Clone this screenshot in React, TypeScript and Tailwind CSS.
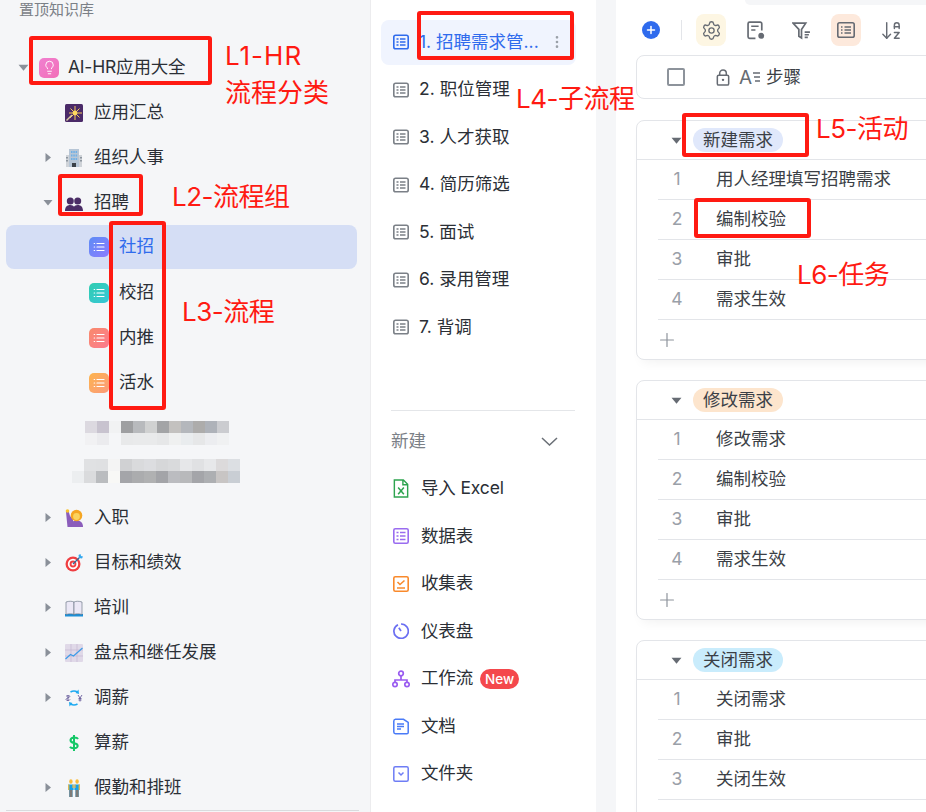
import type { ReactNode } from 'react';
import { ArrowDownAZ, EllipsisVertical, Lightbulb, Plus, Settings } from 'lucide-react';

function Caret({ open, color = '#8a9099' }: { open?: boolean; color?: string }) {
  return (
    <svg viewBox="0 0 10 10" className="h-[11px] w-[11px]">
      {open ? <path d="M.5 2.500h9L5 8z" fill={color} /> : <path d="M2.500 .5v9L8 5z" fill={color} />}
    </svg>
  );
}

function ListBadge({ className }: { className: string }) {
  return (
    <span className={`flex h-5 w-5 items-center justify-center rounded-[5px] ${className}`}>
      <svg viewBox="0 0 12 12" className="h-3 w-3" stroke="#fff" strokeWidth="1.2" strokeLinecap="round">
        <path d="M1.2 2.5h.4M1.2 6h.4M1.2 9.5h.4M4 2.5h7M4 6h7M4 9.5h7" />
      </svg>
    </span>
  );
}

const emoji: Record<string, ReactNode> = {
  spark: (
    <svg viewBox="0 0 18 18" className="h-[18px] w-[18px]">
      <rect width="18" height="18" rx="1.5" fill="#4a2a68" />
      <path d="M10 2v5M10 11v5M4 9h4M12 9h5M5.5 4.5 8.5 7.5M14.5 4.5 11.5 7.5M5 14l3.5-3.5M14.5 13.5 11.5 10.5" stroke="#f4c95a" strokeWidth="1" />
      <circle cx="10" cy="9" r="2.4" fill="#ffd95e" />
      <path d="M1.5 16.5 7 11" stroke="#d9c7a0" strokeWidth="1.4" />
    </svg>
  ),
  office: (
    <svg viewBox="0 0 18 18" className="h-[18px] w-[18px]">
      <path d="M1 6h16v12H1z" fill="#cfd3d8" />
      <path d="M4 0h10v18H4z" fill="#b7c6d6" />
      <path d="M6 2h1.5v2H6zM8.3 2h1.5v2H8.300zM10.600 2h1.500v2h-1.500zM6 5.500h1.500v2H6zM8.300 5.500h1.500v2H8.300zM10.600 5.500h1.500v2h-1.500zM6 9h1.500v2H6zM8.300 9h1.500v2H8.300zM10.600 9h1.500v2h-1.500z" fill="#6fb0e6" />
      <path d="M7 14h4v4H7z" fill="#3b4148" />
      <path d="M1 8h2v1.500H1zM1 11h2v1.500H1zM15 8h2v1.500h-2zM15 11h2v1.500h-2z" fill="#8d969f" />
    </svg>
  ),
  people: (
    <svg viewBox="0 0 18 18" className="h-[18px] w-[18px]" fill="#4b2d66">
      <circle cx="5.300" cy="7" r="3.500" />
      <circle cx="12.700" cy="7" r="3.500" />
      <path d="M0 17c0-4 2-6 5.300-6 2 0 3 .8 3.700 1.800.7-1 1.700-1.800 3.700-1.800C16 11 18 13 18 17z" />
    </svg>
  ),
  hand: (
    <svg viewBox="0 0 18 18" className="h-[18px] w-[18px]">
      <path d="M1 3 3.500 2 5 7l3 3v8H2.500z" fill="#8b5dbb" />
      <path d="M6 18c0-5 2-6.500 5.500-6.500S18 13 18 18z" fill="#8b5dbb" />
      <circle cx="2.500" cy="2" r="1.800" fill="#f8c22f" />
      <circle cx="11.500" cy="6.500" r="5.800" fill="#f5a623" />
      <circle cx="11.500" cy="7.500" r="3.400" fill="#fbd35e" />
    </svg>
  ),
  target: (
    <svg viewBox="0 0 18 18" className="h-[18px] w-[18px]">
      <circle cx="8" cy="10" r="7.500" fill="#ef3e42" />
      <circle cx="8" cy="10" r="5.200" fill="#fff" />
      <circle cx="8" cy="10" r="3.400" fill="#ef3e42" />
      <circle cx="8" cy="10" r="1.500" fill="#fff" />
      <path d="m8 10 7-7" stroke="#2d6d9c" strokeWidth="1.200" />
      <path d="m13.500 1 .5 3 3 .5 1-2-2-.5-.5-2z" fill="#35a8ee" />
    </svg>
  ),
  book: (
    <svg viewBox="0 0 18 18" className="h-[18px] w-[18px]">
      <path d="M0 15h18v2.500H0z" fill="#1d8fd6" />
      <path d="M1 3c3-1 6-1 8 0v12.500c-2-1-5-1-8 0z" fill="#ebe8f6" stroke="#5a6a7a" strokeWidth=".6" />
      <path d="M17 3c-3-1-6-1-8 0v12.500c2-1 5-1 8 0z" fill="#ebe8f6" stroke="#5a6a7a" strokeWidth=".6" />
    </svg>
  ),
  chart: (
    <svg viewBox="0 0 18 18" className="h-[18px] w-[18px]">
      <rect width="18" height="18" rx="1" fill="#e0d9e8" />
      <path d="M0 6h18M0 12h18M6 0v18M12 0v18" stroke="#c4b8d2" strokeWidth=".7" />
      <path d="m.5 15 5-4.500 3 1.500 9-8" stroke="#3c9be8" strokeWidth="1.200" fill="none" />
    </svg>
  ),
  exchange: (
    <svg viewBox="0 0 18 18" className="h-[18px] w-[18px]">
      <path d="M5.500 3a7 7 0 0 1 7 0M12.500 15a7 7 0 0 1-7 0" stroke="#1eaaf1" strokeWidth="1.600" fill="none" />
      <path d="m13.500 .5.5 4.500-3.500-1zM4.500 17.500 4 13l3.500 1z" fill="#1eaaf1" />
      <path d="M3 6v6M1 7.500c0-1 4-1 4 0S1 9 1 10.500s4 1 4 0M13 6l2 3 2-3M15 9v3.500M13.500 9.500h3M13.500 11h3" stroke="#675b9b" strokeWidth=".9" fill="none" />
    </svg>
  ),
  dollar: (
    <svg viewBox="0 0 18 18" className="h-[18px] w-[18px]" fill="none" stroke="#14c767" strokeWidth="2">
      <path d="M9 1v16M13 5c-1-1.800-7-2.300-7.500 1C5 10 13 8 12.700 12c-.3 3-6.700 2.700-7.700.7" />
    </svg>
  ),
  walk: (
    <svg viewBox="0 0 18 18" className="h-[18px] w-[14px]" preserveAspectRatio="none">
      <circle cx="5" cy="2.500" r="2.200" fill="#f9bb3a" />
      <circle cx="13" cy="2.500" r="2.200" fill="#f9bb3a" />
      <path d="M1.500 5.500h7V11H7v7H3v-7H1.500z" fill="#18a0e8" />
      <path d="M9.500 5.500h7V11H15v7h-4v-7H9.500z" fill="#18a0e8" />
      <path d="M3 11h4v7H3zM11 11h4v7h-4z" fill="#7d7b78" />
      <path d="M1.500 5.500h1.500V11H1.500zM15 5.500h1.500V11H15zM7 5.500h1.500V9H7zM9.500 5.500H11V9H9.500z" fill="#f9bb3a" />
    </svg>
  ),
};

function TreeRow({
  level,
  caret,
  icon,
  label,
  active,
}: {
  level: 2 | 3;
  caret?: 'open' | 'closed';
  icon: ReactNode;
  label: string;
  active?: boolean;
}) {
  return (
    <div
      className={`mx-[6px] flex w-[351px] items-center rounded-lg ${level === 3 ? 'pl-[83px]' : 'pl-[37px]'} ${active ? 'mb-px h-[44px] bg-[#d5def5] text-[#2f6bed]' : 'h-[45px]'}`}
    >
      {level === 2 && (
        <span className="mr-[11px] flex w-[10px] justify-center">{caret && <Caret open={caret === 'open'} />}</span>
      )}
      <span className="flex w-5 justify-center">{icon}</span>
      <span className="ml-[10px] pb-[2px] leading-[24px]">{label}</span>
    </div>
  );
}

const mosaicOne = [
  ['#dcd9e0', '#c8c3cf', '#f1f2f3', '#9e9fa1', '#b8babd', '#d0d1d1', '#a3a4a6', '#c3c1bf', '#b4b7bc', '#adacab', '#aeb2b9', '#cbccd0'],
  ['#f1f1f3', '#ebebee', '#f5f6f8', '#e8e9ea', '#e9eaeb', '#e9eaeb', '#e6e7e8', '#eff0f0', '#e9ecee', '#e6e7e8', '#ecedf0', '#f0f1f2'],
];
const mosaicTwo = [
  ['#f5f6f8', '#e0e1e3', '#dfe0e2', '#f4f4f4', '#d0d1d3', '#d9dadc', '#dcdde0', '#d6d7d9', '#d9dadc', '#e6e7e9', '#e0e1e3', '#e7e8ea', '#dcdadb', '#dcdfe3'],
  ['#eceef0', '#dadbdd', '#babcbf', '#f8f8f6', '#a4a5a9', '#abacae', '#b0b1b2', '#a3a4a8', '#bbbcc0', '#b8b9bb', '#a4a5a9', '#adafb2', '#c8c5c4', '#c9ced4'],
];

// blurred out rows in the original screenshot
function Mosaic({ rows, className }: { rows: string[][]; className: string }) {
  return (
    <div className={`flex h-[45px] flex-col ${className}`}>
      {rows.map((row, i) => (
        <div key={i} className="flex">
          {row.map((c, j) => (
            <span key={j} className="h-3 w-3" style={{ backgroundColor: c }} />
          ))}
        </div>
      ))}
    </div>
  );
}

function Sidebar() {
  return (
    <aside className="h-full w-[371px] shrink-0 border-r border-[#ececee] bg-[#f5f6f8] text-[17.5px] text-[#2b2f36]">
      <div className="h-[45px] pl-[19px] text-[15px] leading-[20px] text-[#7b8087]">置顶知识库</div>
      <div className="flex h-[45px] items-center pl-[18px]">
        <span className="flex w-[11px] justify-center">
          <Caret open />
        </span>
        <span className="ml-[10px] flex h-5 w-5 items-center justify-center rounded-[5px] bg-gradient-to-br from-[#f07fd0] to-[#f26fb8]">
          <Lightbulb size={15} color="#fff" strokeWidth={1.5} />
        </span>
        <span className="ml-[9px] pb-[2px] leading-[24px] tracking-[-0.2px]">AI-HR应用大全</span>
      </div>
      <TreeRow level={2} icon={emoji.spark} label="应用汇总" />
      <TreeRow level={2} caret="closed" icon={emoji.office} label="组织人事" />
      <TreeRow level={2} caret="open" icon={emoji.people} label="招聘" />
      <TreeRow level={3} active icon={<ListBadge className="bg-gradient-to-br from-[#5b8cf5] to-[#8b7cff]" />} label="社招" />
      <TreeRow level={3} icon={<ListBadge className="bg-gradient-to-br from-[#2fcdb0] to-[#3ac6d8]" />} label="校招" />
      <TreeRow level={3} icon={<ListBadge className="bg-gradient-to-br from-[#f98a6b] to-[#fb7a8e]" />} label="内推" />
      <TreeRow level={3} icon={<ListBadge className="bg-gradient-to-br from-[#fdb44b] to-[#fb9a7a]" />} label="活水" />
      <Mosaic rows={mosaicOne} className="pl-[85px] pt-[16px]" />
      <Mosaic rows={mosaicTwo} className="pl-[72px] pt-[9px]" />
      <TreeRow level={2} caret="closed" icon={emoji.hand} label="入职" />
      <TreeRow level={2} caret="closed" icon={emoji.target} label="目标和绩效" />
      <TreeRow level={2} caret="closed" icon={emoji.book} label="培训" />
      <TreeRow level={2} caret="closed" icon={emoji.chart} label="盘点和继任发展" />
      <TreeRow level={2} caret="closed" icon={emoji.exchange} label="调薪" />
      <TreeRow level={2} icon={emoji.dollar} label="算薪" />
      <TreeRow level={2} caret="closed" icon={emoji.walk} label="假勤和排班" />
      <div className="mx-[6px] w-[353px] border-t border-[#d9dbde]" />
    </aside>
  );
}

function TableIcon({ color }: { color: string }) {
  return (
    <svg viewBox="0 0 16 16" className="h-4 w-4 shrink-0" fill="none" stroke={color} strokeWidth="1.600">
      <rect x=".8" y="1.200" width="14.400" height="13.600" rx="1.800" />
      <path d="M3.500 5h2M3.500 8h2M3.500 11h2M7 5h5.500M7 8h5.500M7 11h5.500" strokeWidth="1.400" />
    </svg>
  );
}

const subflows = ['2. 职位管理', '3. 人才获取', '4. 简历筛选', '5. 面试', '6. 录用管理', '7. 背调'];

const createItems: { label: string; icon: ReactNode; badge?: boolean }[] = [
  {
    label: '导入 Excel',
    icon: (
      <svg viewBox="0 0 16 20" className="h-[19px] w-4" fill="none" stroke="#2ea44f" strokeWidth="1.500">
        <path d="M1 1h9.500L15 5.500V19H1zM10 1v5h5" />
        <path d="m5 9 6 7M11 9l-6 7" strokeWidth="1.600" />
      </svg>
    ),
  },
  {
    label: '数据表',
    icon: (
      <svg viewBox="0 0 16 16" className="h-4 w-4" fill="none" stroke="#9a6cf0" strokeWidth="1.600">
        <rect x=".8" y=".8" width="14.400" height="14.400" rx="1.500" />
        <path d="M3.500 4.500h2M3.500 8h2M3.500 11.500h2M7 4.500h5.500M7 8h5.500M7 11.500h5.500" />
      </svg>
    ),
  },
  {
    label: '收集表',
    icon: (
      <svg viewBox="0 0 16 16" className="h-4 w-4" fill="none" stroke="#f98a2c" strokeWidth="1.600">
        <rect x=".8" y=".8" width="14.400" height="14.400" rx="1.500" />
        <path d="m4.500 6 2.500 2.500L11.500 4.500M4 12h8" />
      </svg>
    ),
  },
  {
    label: '仪表盘',
    icon: (
      <svg viewBox="0 0 16 16" className="h-4 w-4" fill="none" stroke="#6b6ff2" strokeWidth="1.700">
        <path d="M5 1.700a7.200 7.200 0 1 0 3-.7" />
        <path d="M8 8 5.800 4.800" />
      </svg>
    ),
  },
  {
    label: '工作流',
    badge: true,
    icon: (
      <svg viewBox="0 0 18 18" className="h-[18px] w-[18px] shrink-0" fill="none" stroke="#9a5cf0" strokeWidth="1.700">
        <circle cx="9" cy="3.500" r="2.300" />
        <circle cx="3" cy="14.500" r="2.200" />
        <circle cx="15" cy="14.500" r="2.200" />
        <path d="M9 6v4M3 12.300V10h12v2.300" />
      </svg>
    ),
  },
  {
    label: '文档',
    icon: (
      <svg viewBox="0 0 16 16" className="h-[17px] w-4" fill="none" stroke="#4a7bf7" strokeWidth="1.500">
        <path d="M2.500.8h8L15.200 4v10a1.300 1.300 0 0 1-1.300 1.300H2.500A1.800 1.800 0 0 1 .8 13.500V2.500A1.800 1.800 0 0 1 2.500.8z" />
        <path d="M4 5.500h7M4 8h7M4 10.500h4" strokeWidth="1.300" />
      </svg>
    ),
  },
  {
    label: '文件夹',
    icon: (
      <svg viewBox="0 0 16 16" className="h-4 w-4" fill="none" stroke="#6e7df5" strokeWidth="1.500">
        <rect x=".8" y=".8" width="14.400" height="14.400" rx="1.500" />
        <path d="m5.500 6.500 2.500 2.500 2.500-2.500" />
      </svg>
    ),
  },
];

function MiddleColumn() {
  return (
    <section className="h-full w-[225px] shrink-0 bg-white pt-[18.5px] text-[17.5px] text-[#2b2f36]">
      <div className="flex h-[47.5px] items-center">
        <div className="ml-[10px] flex h-[45px] w-[195px] items-center rounded-lg bg-[#f0f4fe] pl-3 text-[#2f6bed]">
          <TableIcon color="#2f6bed" />
          <span className="ml-[10px] w-[129px] whitespace-nowrap pb-[1px]">1. 招聘需求管...</span>
          <EllipsisVertical size={16} color="#9aa0a8" className="ml-[1px]" />
        </div>
      </div>
      {subflows.map((name) => (
        <div key={name} className="flex h-[47.5px] items-center pl-[22px]">
          <TableIcon color="#7b8087" />
          <span className="ml-[10px] pb-[1px]">{name}</span>
        </div>
      ))}
      <div className="mx-[20px] mt-[59px] w-[184px] border-t border-[#e4e6e9]" />
      <div className="mt-[6.500px] flex h-[47.5px] items-center justify-between pl-[20px] pr-[38px] text-[#7b8087]">
        <span className="pb-[1px]">新建</span>
        <svg viewBox="0 0 17 9" className="h-[9px] w-[17px]" fill="none" stroke="#6b7077" strokeWidth="1.500">
          <path d="m1 1 7.500 7L16 1" />
        </svg>
      </div>
      {createItems.map((item) => (
        <div key={item.label} className="flex h-[47.5px] items-center pl-[22px]">
          <span className="flex w-4 justify-center">{item.icon}</span>
          <span className="ml-3 pb-[1px] tracking-[-0.15px]">{item.label}</span>
          {item.badge && (
            <span className="ml-[7px] rounded-full bg-[#f4484c] px-[5px] text-[13.500px] font-medium leading-[20px] text-white">New</span>
          )}
        </div>
      ))}
    </section>
  );
}

function ToolbarBox({ children, className = '' }: { children: ReactNode; className?: string }) {
  return <span className={`flex h-8 w-[30px] items-center justify-center rounded-lg ${className}`}>{children}</span>;
}

function TaskCard({ title, tone, tasks, withAdd = true }: { title: string; tone: string; tasks: string[]; withAdd?: boolean }) {
  return (
    <div className="mb-5 w-[320px] rounded-lg border border-[#e3e5e9] bg-white shadow-[0_8px_12px_-6px_rgba(0,0,0,0.06)]">
      <div className="flex h-[39px] items-center border-b border-[#e3e5e9] pl-[34px]">
        <Caret open color="#666b73" />
        <span className={`ml-[11px] rounded-full px-[10px] leading-[24px] text-[#3b3f46] ${tone}`}>{title}</span>
      </div>
      {tasks.map((task, i) => (
        <div key={task} className="ml-[21px] flex h-10 items-center border-b border-[#e3e5e9]">
          <span className="w-[38px] text-center text-[#9aa0a8]">{i + 1}</span>
          <span className="ml-[20px] text-[#3b3f46]">{task}</span>
        </div>
      ))}
      {withAdd && (
        <div className="flex h-[39px] items-center pl-[19px]">
          <Plus size={22} color="#8d939b" strokeWidth={1.300} />
        </div>
      )}
    </div>
  );
}

function RightPanel() {
  return (
    <section className="h-full flex-1 overflow-hidden bg-white text-[17.5px]">
      <div className="ml-[129px] h-[5px] rounded-bl-xl bg-[#f5f6f8]" />
      <div className="flex h-[50px] items-center pl-[26px]">
        <span className="flex h-[18px] w-[18px] items-center justify-center rounded-full bg-[#2f6bed]">
          <Plus size={12} color="#fff" strokeWidth={3} />
        </span>
        <span className="ml-[21px] mr-[14px] h-5 w-px bg-[#e3e5e9]" />
        <div className="flex gap-[15px]">
          <ToolbarBox className="bg-[#fdf6e3]">
            <Settings size={21} color="#666b73" strokeWidth={1.500} />
          </ToolbarBox>
          <ToolbarBox>
            <svg viewBox="0 0 18 18" className="h-[19px] w-[19px]" fill="none" stroke="#666b73" strokeWidth="1.600">
              <path d="M8 16.500H2.500a1.500 1.500 0 0 1-1.500-1.500V2.500A1.500 1.500 0 0 1 2.500 1h10A1.500 1.500 0 0 1 14 2.500V9M4 5h7M4 8.500h4" />
              <circle cx="13.500" cy="14" r="2" fill="#666b73" />
            </svg>
          </ToolbarBox>
          <ToolbarBox>
            <svg viewBox="0 0 18 18" className="h-[19px] w-[19px]" fill="none" stroke="#666b73" strokeWidth="1.600">
              <path d="M1 2h12L9 8v8l-2.500-1.500V8zM12 10.500h5M12 13h4M12 15.500h3" />
            </svg>
          </ToolbarBox>
          <ToolbarBox className="bg-[#fde9dc]">
            <svg viewBox="0 0 18 16" className="h-4 w-[18px]" fill="none" stroke="#666b73" strokeWidth="1.600">
              <rect x=".8" y=".8" width="16.400" height="14.400" rx="1.800" />
              <path d="M4 5h1.500M4 8h1.500M4 11h1.500M7.500 5H14M7.500 8H14M7.500 11H14" />
            </svg>
          </ToolbarBox>
          <ToolbarBox>
            <ArrowDownAZ size={23} color="#666b73" strokeWidth={1.500} />
          </ToolbarBox>
        </div>
      </div>
      <div className="ml-[20px] mb-[21px] flex h-[44px] w-[320px] items-center rounded-lg border border-[#e3e5e9] bg-white pl-[30px] text-[#3b3f46]">
        <span className="h-[18px] w-[18px] rounded-[2px] border-2 border-[#8d939b]" />
        <svg viewBox="0 0 14 18" className="ml-[31px] h-[17px] w-[14px]" fill="none" stroke="#666b73" strokeWidth="1.600">
          <rect x="1" y="6.500" width="12" height="10.500" rx="1.500" />
          <path d="M3.500 6.500V4.500a3.500 3.500 0 0 1 7 0v2" />
          <circle cx="7" cy="11.500" r="1.300" fill="#666b73" stroke="none" />
        </svg>
        <span className="ml-[9px] text-[19px] leading-none text-[#666b73]">A</span>
        <svg viewBox="0 0 7 12" className="ml-[1px] h-3 w-[7px]" stroke="#666b73" strokeWidth="1.300">
          <path d="M0 2h7M1 6h6M2 10h5" />
        </svg>
        <span className="ml-[6px]">步骤</span>
      </div>
      <div className="ml-[20px]">
        <TaskCard title="新建需求" tone="bg-[#e0e8fb]" tasks={['用人经理填写招聘需求', '编制校验', '审批', '需求生效']} />
        <TaskCard title="修改需求" tone="bg-[#fde5cd]" tasks={['修改需求', '编制校验', '审批', '需求生效']} />
        <TaskCard title="关闭需求" tone="bg-[#c9ecfc]" tasks={['关闭需求', '审批', '关闭生效']} />
      </div>
    </section>
  );
}

const redBoxes = [
  'left-[29px] top-[36px] h-[49px] w-[183px]',
  'left-[58px] top-[174px] h-[42px] w-[85px]',
  'left-[109px] top-[221px] h-[189px] w-[57px]',
  'left-[417px] top-[11px] h-[49px] w-[157px]',
  'left-[682px] top-[113px] h-[44px] w-[127px]',
  'left-[694px] top-[198px] h-[40px] w-[117px]',
];

const redLabels = [
  { text: 'L1-HR', pos: 'left-[225px] top-[39px] tracking-[1px]' },
  { text: '流程分类', pos: 'left-[225px] top-[76px]' },
  { text: 'L2-流程组', pos: 'left-[172px] top-[180px] tracking-[-0.5px]' },
  { text: 'L3-流程', pos: 'left-[182px] top-[295px] tracking-[-0.5px]' },
  { text: 'L4-子流程', pos: 'left-[516px] top-[82px] tracking-[-0.5px]' },
  { text: 'L5-活动', pos: 'left-[816px] top-[112px] tracking-[-0.5px]' },
  { text: 'L6-任务', pos: 'left-[797px] top-[258px] tracking-[-0.5px]' },
];

export default function App() {
  return (
    <div className="relative flex h-[812px] w-[926px] overflow-hidden bg-white font-['Inter','Noto_Sans_CJK_SC',sans-serif]">
      <Sidebar />
      <MiddleColumn />
      <div className="h-full w-5 shrink-0 bg-[#f5f6f8]" />
      <RightPanel />
      {redBoxes.map((pos) => (
        <div key={pos} className={`absolute rounded-[3px] border-4 border-[#ff1a12] ${pos}`} />
      ))}
      {redLabels.map((l) => (
        <div key={l.text} className={`absolute text-[26px] leading-[34px] text-[#ff1a12] ${l.pos}`}>
          {l.text}
        </div>
      ))}
    </div>
  );
}
